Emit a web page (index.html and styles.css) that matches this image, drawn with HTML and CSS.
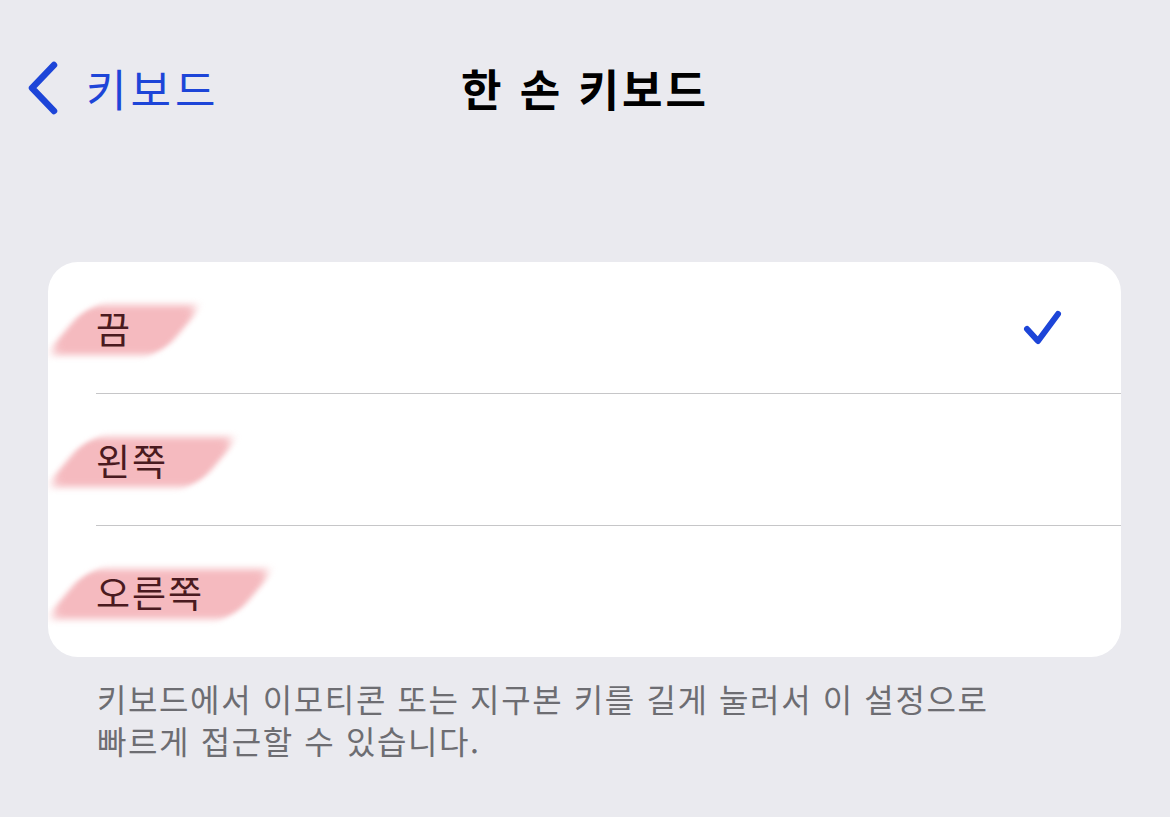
FILE: index.html
```html
<!DOCTYPE html>
<html lang="ko">
<head>
    <meta charset="UTF-8">
    <meta name="viewport" content="width=device-width, initial-scale=1.0">
    <title>한 손 키보드</title>
    <link rel="stylesheet" href="styles.css">
</head>
<body>
    <!-- Navigation bar -->
    <header class="nav-bar">
        <a class="back-link" href="#">
            <svg class="back-chevron" width="40" height="60" viewBox="0 0 40 60">
                <path d="M30 7 L8 30 L30 53" fill="none" stroke="currentColor" stroke-width="6.5" stroke-linecap="round" stroke-linejoin="round"/>
            </svg>
            <span>키보드</span>
        </a>
        <h1 class="nav-title">한 손 키보드</h1>
        <div></div>
    </header>

    <!-- Options list -->
    <main class="content">
        <ul class="option-list">
            <li class="option-row">
                <span class="option-label">끔</span>
                <svg class="check-mark" width="40" height="40" viewBox="0 0 40 40">
                    <path d="M4 21 L15 33 L35 6" fill="none" stroke="currentColor" stroke-width="6" stroke-linecap="round" stroke-linejoin="round"/>
                </svg>
            </li>
            <li class="option-row">
                <span class="option-label">왼쪽</span>
            </li>
            <li class="option-row">
                <span class="option-label">오른쪽</span>
            </li>
        </ul>
        <p class="footnote">키보드에서 이모티콘 또는 지구본 키를 길게 눌러서 이 설정으로<br>빠르게 접근할 수 있습니다.</p>
    </main>
</body>
</html>
```

FILE: styles.css
```css
/* General body styling */
body {
    margin: 0;
    padding: 0;
    background-color: #eaeaef;
    font-family: "Noto Sans CJK KR", "Noto Sans", sans-serif;
    color: #000;
}

/* Navigation bar */
.nav-bar {
    display: grid;
    grid-template-columns: 1fr auto 1fr;
    align-items: center;
    height: 176px;
}

.back-link {
    display: flex;
    align-items: center;
    gap: 22px;
    padding-left: 24px;
    color: #1d45d8;
    text-decoration: none;
    font-size: 44px;
    letter-spacing: 4px;
}

.back-chevron {
    display: block;
}

.nav-title {
    margin: 0;
    font-size: 44px;
    font-weight: 700;
    letter-spacing: 3px;
}

/* Main content */
.content {
    padding: 86px 49px 0 48px;
}

.option-list {
    list-style: none;
    margin: 0;
    padding: 0;
    background-color: #fff;
    border-radius: 30px;
    overflow: hidden;
}

.option-row {
    display: flex;
    align-items: center;
    justify-content: space-between;
    height: 131px;
    margin-left: 48px;
    padding-right: 58px;
    border-bottom: 1px solid #c6c6c8;
}

.option-row:last-child {
    border-bottom: none;
}

.option-label {
    position: relative;
    font-size: 37px;
    letter-spacing: 2px;
    color: #4a1a20;
    z-index: 0;
}

/* Pink marker highlight behind labels */
.option-label::before {
    content: "";
    position: absolute;
    left: -30px;
    right: -50px;
    top: 4px;
    bottom: 0;
    background-color: rgba(238, 140, 148, 0.6);
    transform: skewX(-40deg);
    border-radius: 16px;
    filter: blur(3.5px);
    z-index: -1;
}

.check-mark {
    display: block;
    color: #1d45d8;
}

.footnote {
    margin: 20px 0 0 49px;
    font-size: 32px;
    line-height: 42px;
    letter-spacing: 1.6px;
    color: #6d6d72;
}
```
